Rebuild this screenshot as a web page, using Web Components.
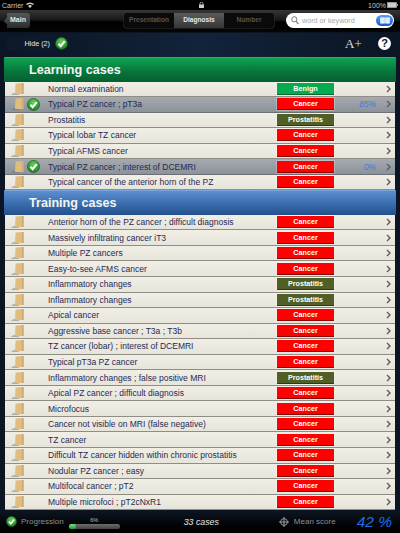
<!DOCTYPE html>
<html lang="en">
<head>
<meta charset="utf-8">
<title>Cases</title>
<style>
  html, body { margin: 0; height: 533px; overflow: hidden; background: #000; }
  body { font-family: "Liberation Sans", Arial, sans-serif; }
  cases-app { height: 533px; }
</style>
</head>
<body>
<cases-app>
  <case-section title="Learning cases" tone="green">
    <case-row label="Normal examination" tag="Benign"></case-row>
    <case-row label="Typical PZ cancer ; pT3a" tag="Cancer" done score="85%"></case-row>
    <case-row label="Prostatitis" tag="Prostatitis"></case-row>
    <case-row label="Typical lobar TZ cancer" tag="Cancer"></case-row>
    <case-row label="Typical AFMS cancer" tag="Cancer"></case-row>
    <case-row label="Typical PZ cancer ; interest of DCEMRI" tag="Cancer" done score="0%"></case-row>
    <case-row label="Typical cancer of the anterior horn of the PZ" tag="Cancer"></case-row>
  </case-section>
  <case-section title="Training cases" tone="blue">
    <case-row label="Anterior horn of the PZ cancer ; difficult diagnosis" tag="Cancer"></case-row>
    <case-row label="Massively infiltrating cancer iT3" tag="Cancer"></case-row>
    <case-row label="Multiple PZ cancers" tag="Cancer"></case-row>
    <case-row label="Easy-to-see AFMS cancer" tag="Cancer"></case-row>
    <case-row label="Inflammatory changes" tag="Prostatitis"></case-row>
    <case-row label="Inflammatory changes" tag="Prostatitis"></case-row>
    <case-row label="Apical cancer" tag="Cancer"></case-row>
    <case-row label="Aggressive base cancer ; T3a ; T3b" tag="Cancer"></case-row>
    <case-row label="TZ cancer (lobar) ; interest of DCEMRI" tag="Cancer"></case-row>
    <case-row label="Typical pT3a PZ cancer" tag="Cancer"></case-row>
    <case-row label="Inflammatory changes ; false positive MRI" tag="Prostatitis"></case-row>
    <case-row label="Apical PZ cancer ; difficult diagnosis" tag="Cancer"></case-row>
    <case-row label="Microfocus" tag="Cancer"></case-row>
    <case-row label="Cancer not visible on MRI (false negative)" tag="Cancer"></case-row>
    <case-row label="TZ cancer" tag="Cancer"></case-row>
    <case-row label="Difficult TZ cancer hidden within chronic prostatitis" tag="Cancer"></case-row>
    <case-row label="Nodular PZ cancer ; easy" tag="Cancer"></case-row>
    <case-row label="Multifocal cancer ; pT2" tag="Cancer"></case-row>
    <case-row label="Multiple microfoci ; pT2cNxR1" tag="Cancer"></case-row>
  </case-section>
</cases-app>

<script>
const CHECK_ICON = (size) => `
  <svg width="${size}" height="${size}" viewBox="0 0 14 14" aria-hidden="true">
    <defs>
      <radialGradient id="g" cx="50%" cy="35%" r="70%">
        <stop offset="0" stop-color="#6fd05a"/>
        <stop offset="1" stop-color="#0c7a1e"/>
      </radialGradient>
    </defs>
    <circle cx="7" cy="7" r="6.6" fill="url(#g)" stroke="#0a4a14" stroke-width=".5"/>
    <path d="M3.7 7.2 6.1 9.8 10.5 4.4" fill="none" stroke="#fff" stroke-width="2.2"/>
  </svg>`;

class StatusBar extends HTMLElement {
  constructor() {
    super();
    this.attachShadow({ mode: 'open' }).innerHTML = `
      <style>
        :host {
          display: flex;
          align-items: center;
          height: 10px;
          padding: 0 2px;
          background: #000;
          color: #c8c8c8;
          font-size: 7px;
        }
        .mid { flex: 1; display: flex; justify-content: center; }
        .right { display: flex; align-items: center; gap: 1px; }
        .wifi { margin-left: 3px; }
      </style>
      <span>Carrier</span>
      <svg class="wifi" width="8" height="6" viewBox="0 0 8 6">
        <path d="M0 2Q4-1 8 2L7 3Q4 1 1 3ZM2 4Q4 2 6 4L4 6Z" fill="#d0d0d0"/>
      </svg>
      <div class="mid">
        <svg width="5" height="6" viewBox="0 0 5 6">
          <rect y="2.5" width="5" height="3.5" fill="#ccc"/>
          <path d="M1 3V1.6a1.5 1.5 0 0 1 3 0V3" fill="none" stroke="#ccc" stroke-width=".8"/>
        </svg>
      </div>
      <div class="right">
        <span>100%</span>
        <svg width="11" height="6" viewBox="0 0 11 6">
          <rect x=".3" y=".3" width="9.4" height="5.4" fill="#ccc" stroke="#999" stroke-width=".5"/>
          <rect x="10" y="2" width="1" height="2" fill="#999"/>
        </svg>
      </div>`;
  }
}

class NavBar extends HTMLElement {
  constructor() {
    super();
    this.attachShadow({ mode: 'open' }).innerHTML = `
      <style>
        :host {
          display: flex;
          align-items: center;
          box-sizing: border-box;
          height: 23px;
          padding: 0 6px 1px 4px;
          background: linear-gradient(#363636, #191919 45%, #000 55%, #050505);
          border-bottom: 1px solid #0b1420;
        }
        .back {
          position: relative;
          z-index: 0;
          margin-left: 3px;
          padding: 0 4px 0 3px;
          height: 15px;
          line-height: 14px;
          font-size: 7px;
          font-weight: bold;
          color: #e6e6e6;
          background: linear-gradient(#585858, #2c2c2c);
          border-radius: 0 3px 3px 0;
        }
        .back::before {
          content: "";
          position: absolute;
          left: -3px;
          top: 2.5px;
          width: 10px;
          height: 10px;
          transform: rotate(45deg) scaleX(.75) scaleY(.75);
          background: linear-gradient(135deg, #585858, #2c2c2c);
          z-index: -1;
        }
        .tabs {
          display: flex;
          margin-left: auto;
          margin-right: 12px;
          height: 15px;
          border-radius: 3px;
          overflow: hidden;
          background: #0a0a0a;
          box-shadow: 0 0 0 .5px #333;
        }
        .tabs span {
          width: 50px;
          text-align: center;
          line-height: 14px;
          font-size: 6.6px;
          font-weight: bold;
          color: #555;
        }
        .tabs .on {
          color: #e8e8e8;
          background: linear-gradient(#5a5a5a, #363636);
        }
        .search {
          display: flex;
          align-items: center;
          gap: 3px;
          box-sizing: border-box;
          width: 108px;
          height: 15px;
          padding: 0 1px 0 5px;
          border-radius: 8px;
          background: #fff;
          color: #a8a8a8;
          font-size: 7.2px;
        }
        .book {
          display: flex;
          align-items: center;
          justify-content: center;
          margin-left: auto;
          width: 17px;
          height: 11px;
          border-radius: 6px;
          background: linear-gradient(#5b9df0, #1a5cc8);
        }
      </style>
      <div class="back">Main</div>
      <div class="tabs">
        <span>Presentation</span><span class="on">Diagnosis</span><span>Number</span>
      </div>
      <div class="search">
        <svg width="8" height="9" viewBox="0 0 8 9">
          <circle cx="3.3" cy="3.3" r="2.6" fill="none" stroke="#777" stroke-width="1"/>
          <path d="M5.2 5.4 7.4 8.2" stroke="#777" stroke-width="1.2"/>
        </svg>
        <span>word or keyword</span>
        <span class="book">
          <svg width="10" height="7" viewBox="0 0 10 7">
            <path d="M.5.8H4.5V6.2H.5ZM5.5.8H9.5V6.2H5.5Z" fill="#dfeaff" stroke="#fff" stroke-width=".6"/>
          </svg>
        </span>
      </div>`;
  }
}

class ToolBar extends HTMLElement {
  constructor() {
    super();
    this.attachShadow({ mode: 'open' }).innerHTML = `
      <style>
        :host {
          display: flex;
          align-items: center;
          box-sizing: border-box;
          height: 24px;
          padding: 0 8px 3px 7px;
          color: #e8e8e8;
        }
        .hide {
          display: flex;
          align-items: center;
          justify-content: flex-end;
          gap: 5px;
          box-sizing: border-box;
          width: 61px;
          height: 15px;
          background: #0e1a2a;
          font-size: 7.2px;
        }
        .font {
          margin-left: auto;
          margin-right: 16px;
          font-family: "Liberation Serif", serif;
          font-size: 13.5px;
          color: #ddd;
        }
        .help {
          width: 13px;
          height: 13px;
          margin-right: 1px;
          border-radius: 50%;
          background: #fff;
          color: #0a1626;
          font-size: 11px;
          font-weight: bold;
          line-height: 13px;
          text-align: center;
        }
      </style>
      <div class="hide"><span>Hide (2)</span>${CHECK_ICON(13)}</div>
      <span class="font">A+</span>
      <span class="help">?</span>`;
  }
}

class CaseSection extends HTMLElement {
  constructor() {
    super();
    this.attachShadow({ mode: 'open' }).innerHTML = `
      <style>
        :host { display: block; }
        header {
          box-sizing: border-box;
          height: 24.5px;
          padding-left: 25px;
          font-size: 12.6px;
          font-weight: bold;
          line-height: 24px;
          color: #f2f6f2;
          border-radius: 1px 1px 0 0;
        }
        :host([tone="green"]) header {
          background: linear-gradient(#0ea350, #07733a 60%, #056030);
          border-top: 1px solid #22b868;
        }
        :host([tone="blue"]) header {
          background: linear-gradient(#5b8fd0, #3a6cac 55%, #234f8c);
          border-top: 1px solid #7aa6dc;
        }
      </style>
      <header></header>
      <slot></slot>`;
  }

  connectedCallback() {
    this.shadowRoot.querySelector('header').textContent = this.getAttribute('title');
    this.removeAttribute('title');
  }
}

class CaseRow extends HTMLElement {
  constructor() {
    super();
    this.attachShadow({ mode: 'open' }).innerHTML = `
      <style>
        :host {
          display: flex;
          align-items: center;
          box-sizing: border-box;
          height: 15.55px;
          margin-left: 1px;
          margin-right: 1px;
          padding-right: 4px;
          background: linear-gradient(#f1eee6, #e7e4da);
          border-bottom: 1px solid #8f8d85;
          color: #1f2a55;
          font-size: 8.5px;
        }
        :host([done]) {
          background: linear-gradient(#a6aab0, #8c9299);
          border-bottom-color: #6c7076;
        }
        .icons {
          display: flex;
          align-items: center;
          flex: none;
          width: 43px;
          padding-left: 6px;
          box-sizing: border-box;
          gap: 2px;
        }
        .folder { flex: none; }
        .icons svg + svg { margin-left: 1px; }
        .label {
          flex: none;
          width: 229px;
          white-space: nowrap;
          overflow: hidden;
        }
        .tag {
          flex: none;
          width: 57px;
          height: 12px;
          box-sizing: border-box;
          text-align: center;
          line-height: 11px;
          color: #fff;
          font-size: 7.2px;
          font-weight: bold;
          background: #fe0000;
          border-bottom: 1px solid #8c0000;
          box-shadow: 0 0 0 .5px rgba(255, 255, 255, .5);
        }
        .tag.benign { background: #06ab50; border-bottom-color: #046c32; }
        .tag.prostatitis { background: #4f5f26; border-bottom-color: #2e3a12; }
        .score {
          flex: 1;
          text-align: right;
          padding-right: 10px;
          color: #3a7be0;
          font-size: 8.4px;
          font-style: italic;
        }
        .chevron { flex: none; }
      </style>
      <span class="icons">
        <svg class="folder" width="13" height="12" viewBox="0 0 13 12">
          <path d="M0 11.2 4 10 8 10 8 11.8 1 11.8Z" fill="#6a6458" opacity=".55"/>
          <path d="M4.6 .4 12.6 0V11L4 11Z" fill="#dfbd80"/>
          <path d="M10.8.1 12.6 0V11H10.8Z" fill="#d0aa6c"/>
        </svg>
      </span>
      <span class="label"></span>
      <span class="tag"></span>
      <span class="score"></span>
      <svg class="chevron" width="5" height="8" viewBox="0 0 5 8">
        <path d="M1 1 4 4 1 7" fill="none" stroke="#5c5c5c" stroke-width="1.4"/>
      </svg>`;
  }

  connectedCallback() {
    const root = this.shadowRoot;
    const tag = this.getAttribute('tag');
    root.querySelector('.label').textContent = this.getAttribute('label');
    const tagEl = root.querySelector('.tag');
    tagEl.textContent = tag;
    tagEl.classList.add(tag.toLowerCase());
    root.querySelector('.score').textContent = this.getAttribute('score') || '';
    if (this.hasAttribute('done')) {
      root.querySelector('.icons').insertAdjacentHTML('beforeend', CHECK_ICON(13));
    }
  }
}

class FootBar extends HTMLElement {
  constructor() {
    super();
    this.attachShadow({ mode: 'open' }).innerHTML = `
      <style>
        :host {
          display: flex;
          align-items: center;
          box-sizing: border-box;
          height: 23px;
          padding: 0 8px 0 6px;
          background: linear-gradient(#0c1622, #000 80%);
          color: #8a8f92;
          font-size: 8px;
        }
        .progress { margin-left: 4px; }
        .meter { width: 51px; margin-left: 5px; padding-top: 2px; }
        .pct {
          display: block;
          text-align: center;
          font-size: 5.6px;
          color: #bbb;
          line-height: 6px;
        }
        .track {
          display: block;
          margin-top: 1px;
          height: 5px;
          border-radius: 3px;
          background: linear-gradient(#6c6c6c, #444);
        }
        .fill {
          display: block;
          width: 7px;
          height: 5px;
          border-radius: 3px;
          background: linear-gradient(#7ee08a, #14a03a);
        }
        .count {
          margin-left: 64px;
          color: #e8e8e8;
          font-size: 8.8px;
          font-style: italic;
        }
        .cross { margin-left: auto; margin-right: 5px; }
        .score {
          margin-left: 21px;
          color: #1d6fe8;
          font-size: 15.5px;
          font-style: italic;
        }
      </style>
      ${CHECK_ICON(11)}
      <span class="progress">Progression</span>
      <span class="meter">
        <span class="pct">6%</span>
        <span class="track"><span class="fill"></span></span>
      </span>
      <span class="count">33 cases</span>
      <svg class="cross" width="10" height="10" viewBox="0 0 10 10">
        <circle cx="5" cy="5" r="3.4" fill="none" stroke="#9a9a9a" stroke-width="1"/>
        <path d="M5 0V10M0 5H10" stroke="#9a9a9a" stroke-width="1"/>
      </svg>
      <span>Mean score</span>
      <span class="score">42 %</span>`;
  }
}

class CasesApp extends HTMLElement {
  constructor() {
    super();
    this.attachShadow({ mode: 'open' }).innerHTML = `
      <style>
        :host {
          display: flex;
          flex-direction: column;
          background: #000;
        }
        .body {
          flex: 1;
          min-height: 0;
          display: flex;
          flex-direction: column;
          background: linear-gradient(90deg, #0b1524, #12233a 50%, #0b1524);
        }
        .list {
          flex: 1;
          min-height: 0;
          overflow: hidden;
          margin: 0 4px;
        }
      </style>
      <status-bar></status-bar>
      <nav-bar></nav-bar>
      <div class="body">
        <tool-bar></tool-bar>
        <div class="list"><slot></slot></div>
      </div>
      <foot-bar></foot-bar>`;
  }
}

customElements.define('status-bar', StatusBar);
customElements.define('nav-bar', NavBar);
customElements.define('tool-bar', ToolBar);
customElements.define('case-section', CaseSection);
customElements.define('case-row', CaseRow);
customElements.define('foot-bar', FootBar);
customElements.define('cases-app', CasesApp);
</script>
</body>
</html>
